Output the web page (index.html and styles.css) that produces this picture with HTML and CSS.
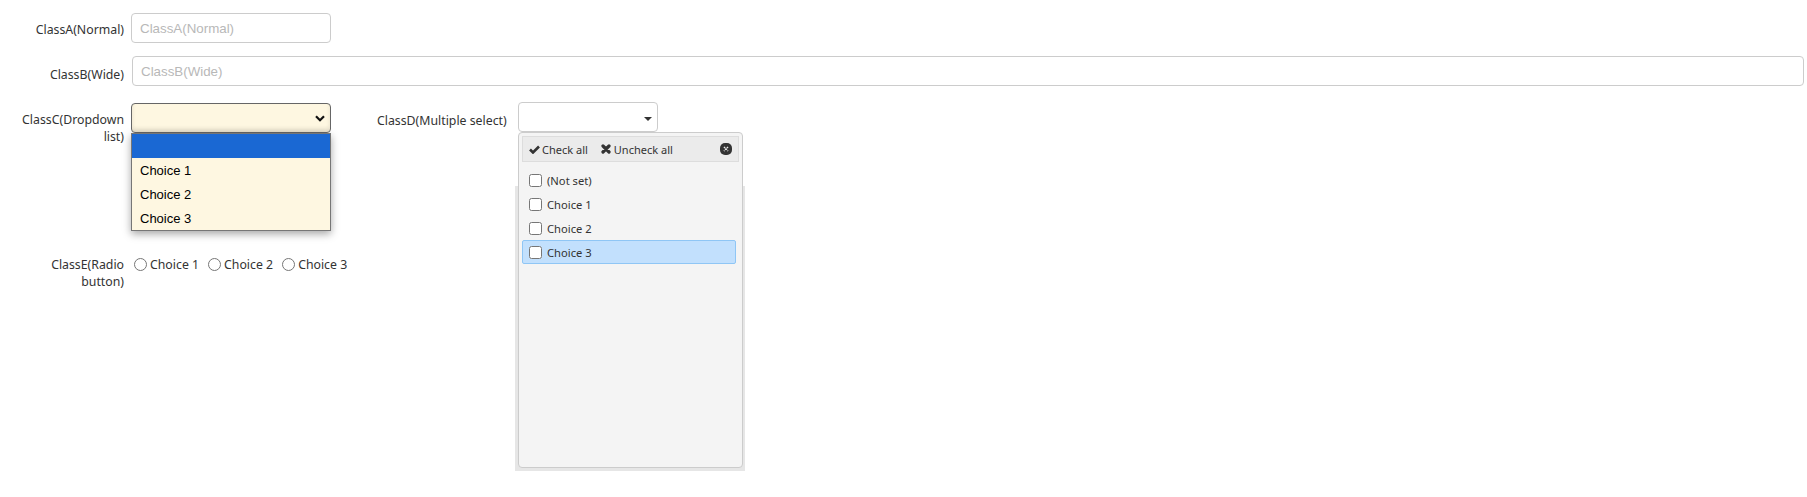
FILE: index.html
```html
<!DOCTYPE html>
<html lang="en">
<head>
    <meta charset="UTF-8">
    <meta name="viewport" content="width=device-width, initial-scale=1.0">
    <title>Form classes</title>
    <link rel="stylesheet" href="styles.css">
</head>
<body>
    <form class="form">
        <div class="row">
            <label class="row-label">ClassA(Normal)</label>
            <input type="text" class="text-input" placeholder="ClassA(Normal)">
        </div>

        <div class="row">
            <label class="row-label row-label-wide">ClassB(Wide)</label>
            <input type="text" class="text-input text-input-wide" placeholder="ClassB(Wide)">
        </div>

        <div class="row row-selects">
            <label class="row-label">ClassC(Dropdown list)</label>
            <div class="dropdown">
                <div class="dropdown-box">
                    <svg class="dropdown-arrow" viewBox="0 0 10 7" width="10" height="7">
                        <path d="M1 1.200 5 5.200l4-4" fill="none" stroke="#111" stroke-width="2.200"/>
                    </svg>
                </div>
                <ul class="dropdown-list">
                    <li class="dropdown-item dropdown-item-active"></li>
                    <li class="dropdown-item">Choice 1</li>
                    <li class="dropdown-item">Choice 2</li>
                    <li class="dropdown-item">Choice 3</li>
                </ul>
            </div>

            <label class="row-label-inline">ClassD(Multiple select)</label>
            <div class="multi">
                <div class="multi-button"><span class="multi-caret"></span></div>
                <div class="multi-shadow"></div>
                <div class="multi-panel">
                    <div class="multi-header">
                        <span class="multi-action">
                            <svg viewBox="0 0 11 9" width="11" height="9">
                                <path d="M1 4.500 4 7.500 10 1.500" fill="none" stroke="#333" stroke-width="2.600"/>
                            </svg>
                            Check all
                        </span>
                        <span class="multi-action multi-action-second">
                            <svg viewBox="0 0 10 10" width="10" height="10">
                                <path d="M2 2l6 6M8 2l-6 6" fill="none" stroke="#333" stroke-width="3.200" stroke-linecap="round"/>
                            </svg>
                            Uncheck all
                        </span>
                        <svg class="multi-close" viewBox="0 0 12 12" width="12" height="12">
                            <rect width="12" height="12" rx="5" fill="#333"/>
                            <path d="M4 4l4 4M8 4l-4 4" fill="none" stroke="#eee" stroke-width="1.500" stroke-dasharray="1.500 1"/>
                        </svg>
                    </div>
                    <ul class="multi-list">
                        <li class="multi-item"><input type="checkbox"><span>(Not set)</span></li>
                        <li class="multi-item"><input type="checkbox"><span>Choice 1</span></li>
                        <li class="multi-item"><input type="checkbox"><span>Choice 2</span></li>
                        <li class="multi-item multi-item-hover"><input type="checkbox"><span>Choice 3</span></li>
                    </ul>
                </div>
            </div>
        </div>

        <div class="row">
            <label class="row-label row-label-radio">ClassE(Radio button)</label>
            <div class="radios">
                <label class="radio"><input type="radio" name="classE">Choice 1</label>
                <label class="radio"><input type="radio" name="classE">Choice 2</label>
                <label class="radio"><input type="radio" name="classE">Choice 3</label>
            </div>
        </div>
    </form>
</body>
</html>
```

FILE: styles.css
```css
* {
    margin: 0;
    padding: 0;
    box-sizing: border-box;
}

html, body {
    height: 100%;
}

body {
    font-family: "Noto Sans", "Open Sans", sans-serif;
    font-size: 12.3px;
    line-height: 17px;
    color: #333;
    background: white;
}

ul {
    list-style: none;
}

.form {
    min-height: 100%;
    padding: 13px 3px 0 0;
}

.row {
    display: flex;
    align-items: flex-start;
    margin-bottom: 13px;
}

.row-label {
    width: 108px;
    flex: none;
    margin-left: 16px;
    margin-right: 7px;
    padding-top: 8px;
    text-align: right;
}

.row-label-wide {
    padding-top: 10px;
}

.row-label-radio {
    padding-top: 0;
    margin-right: 10px;
}

.text-input {
    width: 200px;
    height: 30px;
    padding: 0 8px;
    border: 1px solid #ccc;
    border-radius: 4px;
    font-family: "Liberation Sans", Arial, sans-serif;
    font-size: 13.333px;
    background: white;
}

.text-input::placeholder {
    color: #b8b8b8;
    opacity: 1;
}

.text-input-wide {
    flex: 1;
    margin-left: 1px;
}

.row-selects {
    height: 140px;
    margin-top: 17px;
}

.dropdown {
    position: relative;
    width: 200px;
    flex: none;
    margin-right: 46px;
}

.dropdown-box {
    display: flex;
    align-items: center;
    justify-content: flex-end;
    height: 30px;
    padding-right: 5px;
    border: 1px solid #666;
    border-radius: 4px;
    background: #fef7e1;
    box-shadow: inset 0 -3px 4px rgba(0, 0, 0, 0.1);
}

.dropdown-list {
    position: absolute;
    top: 30px;
    left: 0;
    width: 200px;
    border: 1px solid #767676;
    background: #fef7e1;
    box-shadow: 0 3px 8px rgba(0, 0, 0, 0.35);
    font-family: "Liberation Sans", Arial, sans-serif;
    font-size: 13px;
    color: black;
}

.dropdown-item {
    height: 24px;
    padding: 4px 8px 0;
}

.dropdown-item-active {
    background: #1a68d3;
}

.row-label-inline {
    flex: none;
    width: 130px;
    margin-right: 11px;
    padding-top: 9px;
    white-space: nowrap;
}

.multi {
    position: relative;
    flex: none;
    width: 140px;
    margin-top: -1px;
}

.multi-button {
    position: relative;
    height: 30px;
    border: 1px solid #ccc;
    border-radius: 4px;
    background: white;
}

.multi-caret {
    position: absolute;
    top: 14px;
    right: 5px;
    border-top: 4px solid #333;
    border-left: 4px solid transparent;
    border-right: 4px solid transparent;
}

.multi-shadow {
    position: absolute;
    top: 84px;
    left: -3px;
    width: 230px;
    height: 285px;
    background: #e6e6e6;
}

.multi-panel {
    position: absolute;
    top: 30px;
    left: 0;
    width: 225px;
    height: 336px;
    padding: 3px;
    border: 1px solid #ccc;
    border-radius: 4px;
    background: #f4f4f4;
    font-size: 11.2px;
}

.multi-header {
    display: flex;
    align-items: center;
    height: 26px;
    padding: 0 6px;
    border: 1px solid #ddd;
    background: #ebebeb;
    font-size: 11px;
}

.multi-action {
    display: flex;
    align-items: center;
    gap: 2px;
}

.multi-action-second {
    gap: 3px;
    margin-left: 13px;
}

.multi-close {
    margin-left: auto;
}

.multi-list {
    margin: 6px 3px 0 0;
}

.multi-item {
    display: flex;
    align-items: center;
    height: 24px;
    padding-left: 6px;
    border: 1px solid transparent;
    border-radius: 2px;
}

.multi-item input {
    margin-right: 5px;
}

.multi-item-hover {
    border-color: #8fc6f5;
    background: #c2e0fd;
}

.radios {
    display: flex;
    gap: 9px;
}

.radio {
    display: flex;
    align-items: center;
    height: 17px;
}

.radio input {
    margin: 0 3px 0 0;
}
```
